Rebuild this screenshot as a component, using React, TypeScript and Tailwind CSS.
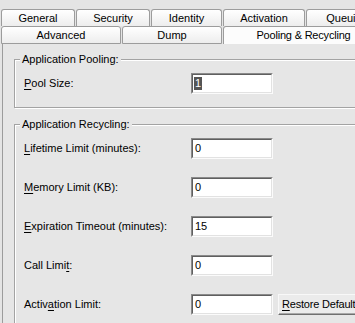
import React from 'react';

const tabTop = [
  { label: 'General', w: 'w-[74px]' },
  { label: 'Security', w: 'w-[74px]' },
  { label: 'Identity', w: 'w-[71px]' },
  { label: 'Activation', w: 'w-[82px]' },
  { label: 'Queuing', w: 'w-[82px]' },
];

function Mn({ text, at }: { text: string; at: number }) {
  // mnemonic underline on one letter
  return (
    <>
      {text.slice(0, at)}
      <span className="underline underline-offset-[2px]">{text[at]}</span>
      {text.slice(at + 1)}
    </>
  );
}

function TextBox({ value, selected }: { value: string; selected?: boolean }) {
  return (
    <div className="w-[82px] h-[21px] shrink-0 border border-t-[#8a8a8a] border-l-[#8a8a8a] border-b-[#fbfbfb] border-r-[#fbfbfb]">
      <div className="h-full border border-t-[#5f5f5f] border-l-[#5f5f5f] border-b-[#e2e2e2] border-r-[#e2e2e2] bg-white flex items-center pl-[1px] leading-[13px]">
        {selected ? <span className="bg-[#555] text-white px-[1px]">{value}</span> : <span className="px-[1px]">{value}</span>}
      </div>
    </div>
  );
}

function Row({ label, value, children }: { label: React.ReactNode; value: string; children?: React.ReactNode }) {
  return (
    <div className="flex items-center h-[21px]">
      <div className="w-[167px] shrink-0">{label}</div>
      <TextBox value={value} />
      {children}
    </div>
  );
}

export default function App() {
  return (
    <div className="w-[355px] h-[323px] overflow-hidden bg-[#e4e4e4] text-black text-[11px] leading-[13px] font-['Liberation_Sans',Arial,sans-serif] flex flex-col">
      {/* tab rows */}
      <div className="flex gap-[1px] pt-[9px] pl-[1px] shrink-0">
        {tabTop.map((t) => (
          <div
            key={t.label}
            className={`${t.w} h-[17px] shrink-0 border border-b-0 border-[#9c9c9c] rounded-t-[3px] bg-gradient-to-b from-white to-[#ededed] flex items-center justify-center`}
          >
            {t.label}
          </div>
        ))}
      </div>
      <div className="flex pl-[1px] shrink-0">
        <div className="w-[120px] h-[18px] shrink-0 border border-[#9c9c9c] rounded-t-[3px] bg-gradient-to-b from-white to-[#ededed] flex items-center justify-center">
          Advanced
        </div>
        <div className="w-[100px] h-[18px] ml-[1px] shrink-0 border border-[#9c9c9c] rounded-t-[3px] bg-gradient-to-b from-white to-[#ededed] flex items-center justify-center">
          Dump
        </div>
        <div className="w-[161px] h-[18px] ml-[1px] shrink-0 border border-b-0 border-[#9c9c9c] rounded-t-[3px] bg-[#fcfcfc] flex items-center justify-center tracking-[-0.2px]">
          Pooling &amp; Recycling
        </div>
      </div>

      {/* tab page */}
      <div className="flex-1 ml-[2px] border-l border-[#9c9c9c] bg-[#e6e6e6] pl-[11px] pt-[8px]">
        <fieldset className="w-[360px] border border-[#a3a3a3] shadow-[1px_1px_0_#fff,inset_1px_1px_0_#fff] pl-[9px] pb-[13px]">
          <legend className="-ml-[4px] px-[2px] leading-[14px] bg-[#e6e6e6]">Application Pooling:</legend>
          <div className="mt-[7px] flex items-center h-[21px]">
            <div className="w-[167px] shrink-0">
              <Mn text="Pool Size:" at={0} />
            </div>
            <TextBox value="1" selected />
          </div>
        </fieldset>

        <fieldset className="mt-[9px] w-[360px] h-[260px] border border-[#a3a3a3] shadow-[1px_1px_0_#fff,inset_1px_1px_0_#fff] pl-[9px]">
          <legend className="-ml-[4px] px-[2px] leading-[14px] bg-[#e6e6e6]">Application Recycling:</legend>
          <div className="mt-[7px] flex flex-col gap-[18px]">
            <Row label={<Mn text="Lifetime Limit (minutes):" at={0} />} value="0" />
            <Row label={<Mn text="Memory Limit (KB):" at={0} />} value="0" />
            <Row label={<Mn text="Expiration Timeout (minutes):" at={0} />} value="15" />
            <Row label={<Mn text="Call Limit:" at={9} />} value="0" />
            <Row label={<Mn text="Activation Limit:" at={5} />} value="0">
              <button className="ml-[5px] w-[90px] h-[21px] shrink-0 border border-t-[#f8f8f8] border-l-[#f8f8f8] border-b-[#6f6f6f] border-r-[#6f6f6f] bg-[#ebebeb] shadow-[inset_-1px_-1px_0_#a8a8a8] text-left pl-[3px] leading-[13px] tracking-[-0.2px]">
                <Mn text="Restore Defaults" at={0} />
              </button>
            </Row>
          </div>
        </fieldset>
      </div>
    </div>
  );
}
